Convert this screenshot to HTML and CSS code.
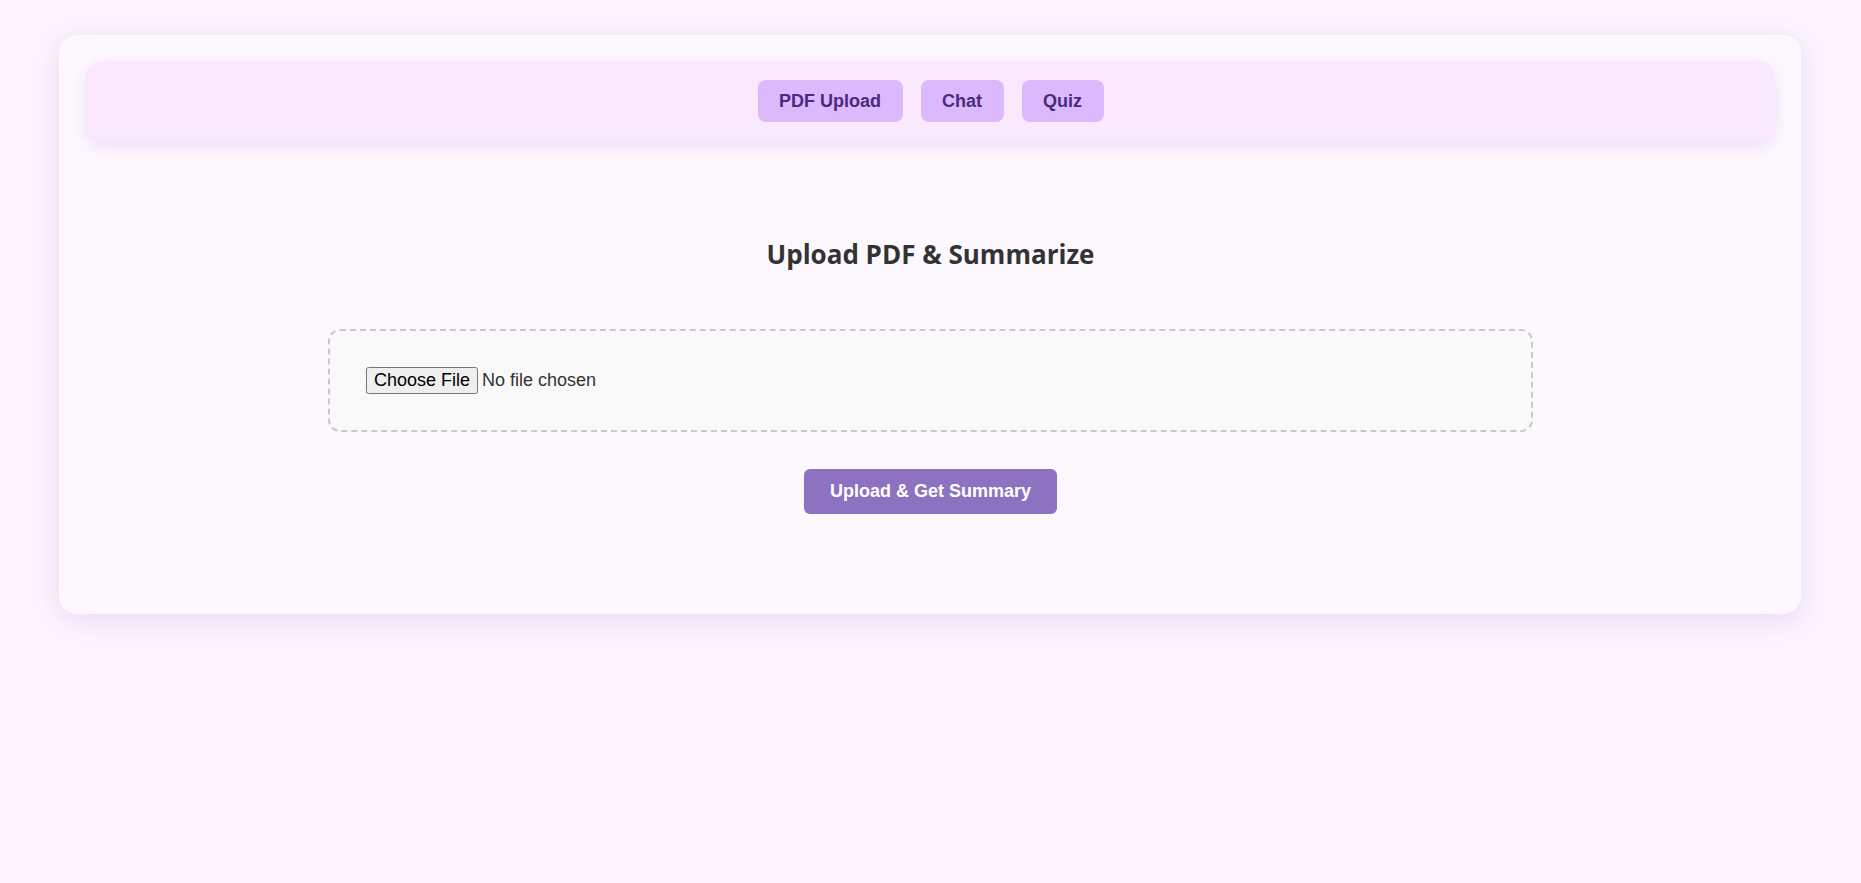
FILE: index.html
```html
<!DOCTYPE html>
<html lang="en">
<head>
<meta charset="utf-8">
<title>PDF Summarizer</title>
<link rel="stylesheet" href="styles.css">
</head>
<body>
  <div class="card">
    <nav class="nav">
      <button class="nav-btn">PDF Upload</button>
      <button class="nav-btn">Chat</button>
      <button class="nav-btn">Quiz</button>
    </nav>
    <section class="upload">
      <h2 class="title">Upload PDF &amp; Summarize</h2>
      <div class="dropzone">
        <input class="file" type="file" accept="application/pdf">
      </div>
      <button class="submit">Upload &amp; Get Summary</button>
    </section>
  </div>
</body>
</html>
```

FILE: styles.css
```css
* { box-sizing: border-box; }

html, body {
  margin: 0;
  height: 100%;
}

body {
  background: #fcf5fd;
  font-family: "Liberation Sans", Arial, sans-serif;
  color: #333;
  padding: 35px 60px 0 59px;
}

.card {
  background: #fdf7fe;
  border-radius: 18px;
  box-shadow: 0 6px 28px rgba(160, 120, 220, 0.22);
  padding: 26px 26px 26px 27px;
}

.nav {
  display: flex;
  justify-content: center;
  gap: 18px;
  background: #f9e8fe;
  border-radius: 16px;
  padding: 19px;
  box-shadow: 0 6px 14px rgba(170, 130, 220, 0.18);
}

.nav-btn {
  font-family: "Liberation Sans", Arial, sans-serif;
  font-size: 18px;
  font-weight: 700;
  line-height: 20px;
  color: #4a2a80;
  background: #dbb9fc;
  border: none;
  border-radius: 8px;
  padding: 11px 21.5px;
  cursor: pointer;
}

.upload {
  display: flex;
  flex-direction: column;
  align-items: center;
  padding: 95px 0 74px;
}

.title {
  margin: 0;
  font-family: "Open Sans", "Noto Sans", sans-serif;
  font-size: 26px;
  font-weight: 700;
  line-height: 36px;
  color: #333;
}

.dropzone {
  width: 1205px;
  margin-top: 57px;
  background: #f9f9f9;
  border: 2px dashed #c9c9c9;
  border-radius: 12px;
  padding: 36px;
}

.file {
  display: block;
  font-family: "Liberation Sans", Arial, sans-serif;
  font-size: 18px;
  color: #333;
}

.submit {
  margin-top: 37px;
  font-family: "Liberation Sans", Arial, sans-serif;
  font-size: 18px;
  font-weight: 700;
  line-height: 21px;
  color: #fff;
  background: #8e72c2;
  border: none;
  border-radius: 6px;
  padding: 12px 25.5px;
  cursor: pointer;
}
```
